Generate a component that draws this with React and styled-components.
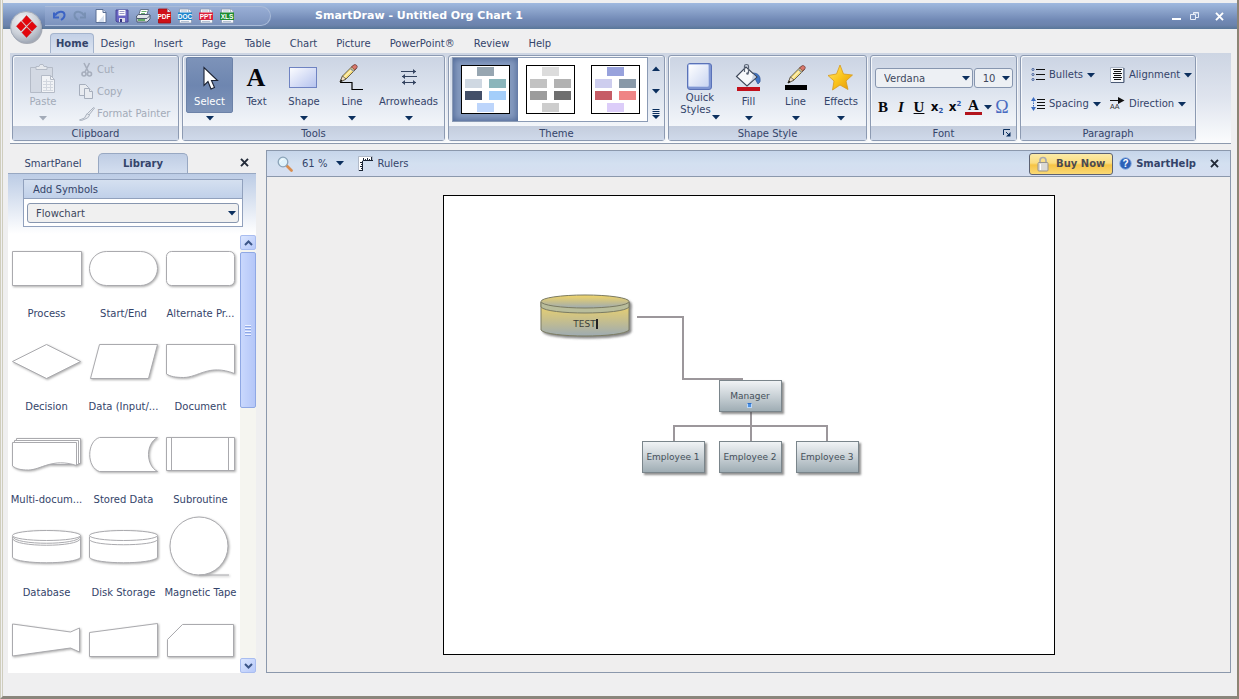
import React from "react";
import styled, { createGlobalStyle, css } from "styled-components";

const ink = "#34446a";
const navy = "#0b2f5e";
const sans = '"DejaVu Sans", Verdana, sans-serif';

const GlobalStyle = createGlobalStyle`
  *, *::before, *::after { box-sizing: border-box; }
  html, body, #root { height: 100%; }
  body {
    margin: 0;
    background: #efefef;
    color: ${ink};
    font-family: ${sans};
    font-size: 10px;
    line-height: 12px;
  }
  button, select, input {
    font: inherit;
    color: inherit;
    margin: 0;
    padding: 0;
    border: 0;
    background: none;
  }
  svg { display: block; flex: none; overflow: visible; }
  ul { list-style: none; margin: 0; padding: 0; }
`;

/* ---------- window frame ---------- */

const Shell = styled.div`
  height: 100%;
  display: flex;
  flex-direction: column;
  padding-top: 3px;
  border-left: 3px double #cfcdbd;
  border-right: 2px solid #8c8474;
  border-bottom: 3px solid #8a867c;
  background: #efeff0;
`;

const TitleBar = styled.header`
  flex: none;
  height: 26px;
  display: flex;
  align-items: center;
  padding: 0 10px 0 6px;
  background: linear-gradient(#9fb9df 0, #8ba3cb 30%, #7189b5 65%, #6c83ac 85%, #597799 100%);
`;

const Orb = styled.button`
  position: relative;
  z-index: 1;
  flex: none;
  width: 36px;
  height: 36px;
  margin-top: 22px;
`;

const QuickBar = styled.div`
  flex: none;
  width: 226px;
  height: 20px;
  display: flex;
  align-items: center;
  gap: 5px;
  padding-left: 6px;
  border: 1px solid #a9bbd8;
  border-left: 0;
  border-radius: 0 10px 10px 0;
  background: linear-gradient(#98aed5, #7c93bd);
`;

const IconButton = styled.button`
  flex: none;
  display: flex;
  align-items: center;
  justify-content: center;
  width: 16px;
  height: 16px;
  opacity: ${(p) => (p.disabled ? 0.5 : 1)};
`;

const WindowTitle = styled.h1`
  flex: 1;
  margin: 0 0 0 44px;
  color: #fff;
  font-size: 11px;
  font-weight: bold;
`;

const WindowButtons = styled.div`
  display: flex;
  align-items: center;
  gap: 2px;
  & > :last-child { margin-left: 7px; }
`;

/* ---------- tabs ---------- */

const TabBar = styled.nav`
  flex: none;
  height: 24px;
  display: flex;
  align-items: flex-end;
  padding-left: 47px;
`;

const MenuTab = styled.button`
  height: 20px;
  padding: 1px 9px 0;
  margin-right: 1px;
  color: ${ink};
  ${(p) =>
    p.$active &&
    css`
      padding: 1px 5px 0;
      margin-right: -3px;
      font-weight: bold;
      border: 1px solid #a4b4cd;
      border-bottom: 0;
      border-radius: 4px 4px 0 0;
      background: linear-gradient(#c3d0e6, #dde5f1);
    `}
`;

/* ---------- ribbon ---------- */

const Ribbon = styled.section`
  flex: none;
  height: 91px;
  display: flex;
  gap: 3px;
  margin: 0 6px 0 7px;
  padding: 2px;
  border-bottom: 1px solid #8d9aae;
  background: linear-gradient(#cdd5e3, #dfe4ee 50%, #fbfcfd);
`;

const Group = styled.section`
  flex: none;
  width: ${(p) => p.$width}px;
  display: flex;
  flex-direction: column;
  border: 1px solid #8c9ab2;
  border-radius: 3px;
  box-shadow: inset 1px 1px 0 #f6f8fb, 1px 1px 0 #f3f5f8;
  background: linear-gradient(#cbd4e3, #dce3ee 40%, #f2f5f9 82%, #fff);
`;

const GroupBody = styled.div`
  flex: 1;
  min-height: 0;
  display: flex;
  padding: ${(p) => p.$pad || "1px 3px 0"};
`;

const GroupTitle = styled.h2`
  position: relative;
  margin: 0;
  height: 14px;
  font-size: 10px;
  font-weight: normal;
  line-height: 15px;
  text-align: center;
  background: linear-gradient(#c4cddd, #cfd9ea);
`;

const Launcher = styled.button`
  position: absolute;
  right: 4px;
  top: 2px;
  width: 10px;
  height: 10px;
`;

const BigButton = styled.button`
  flex: none;
  width: ${(p) => p.$width}px;
  display: flex;
  flex-direction: column;
  align-items: center;
  color: ${(p) => (p.disabled ? "#a3abb8" : ink)};
  & > svg { margin-top: 3px; }
`;

const Face = styled.span`
  align-self: stretch;
  height: 56px;
  display: flex;
  flex-direction: column;
  align-items: center;
  padding-top: 4px;
  border: 1px solid transparent;
  border-radius: 2px;
  ${(p) =>
    p.$on &&
    css`
      color: #fff;
      border-color: #6c82a8;
      background: linear-gradient(#7d93b9, #6e86b0 50%, #7d93b8);
    `}
`;

const IconSlot = styled.span`
  height: 34px;
  display: flex;
  align-items: center;
`;

const Label = styled.span`
  white-space: nowrap;
`;

const SecondLine = styled.span`
  display: flex;
  align-items: flex-end;
  gap: 1px;
  & > svg { margin-bottom: -4px; }
`;

const SmallList = styled.div`
  display: flex;
  flex-direction: column;
  gap: 6px;
  padding: 5px 0 0 9px;
`;

const SmallButton = styled.button`
  height: 16px;
  display: flex;
  align-items: center;
  gap: ${(p) => (p.$tight ? 2 : 4)}px;
  white-space: nowrap;
  color: ${(p) => (p.disabled ? "#a3abb8" : ink)};
`;

const ThemeFrame = styled.div`
  flex: none;
  width: 196px;
  height: 65px;
  display: flex;
  border: 1px solid #8b9bb5;
  background: #fff;
`;

const ThemeTile = styled.button`
  flex: none;
  width: 65px;
  height: 63px;
  display: flex;
  align-items: center;
  justify-content: center;
  ${(p) =>
    p.$on &&
    css`
      background: #8499be;
      box-shadow: inset 0 0 6px 1px #4f6896;
    `}
`;

const ThemeScroll = styled.div`
  flex: 1;
  display: flex;
  flex-direction: column;
  justify-content: space-between;
  align-items: center;
  padding: 3px 0 4px;
`;

const FontPanel = styled.div`
  flex: 1;
  display: flex;
  flex-direction: column;
  gap: 10px;
`;

const Row = styled.div`
  display: flex;
  align-items: center;
  gap: ${(p) => p.$gap || 0}px;
`;

const SelectBox = styled.span`
  position: relative;
  flex: ${(p) => p.$flex || "none"};
  display: flex;
  & > svg {
    position: absolute;
    right: 3px;
    top: 8px;
    pointer-events: none;
  }
`;

const Select = styled.select`
  appearance: none;
  width: 100%;
  height: 20px;
  padding: 1px 0 0 8px;
  border: 1px solid #8796af;
  border-radius: 3px;
  background: ${(p) => p.$bg || "#edf0f4"};
  color: #3d475c;
`;

const FormatButton = styled.button`
  height: 18px;
  min-width: 16px;
  display: flex;
  align-items: center;
  justify-content: center;
  gap: 2px;
  font-family: "Liberation Serif", serif;
  font-size: ${(p) => p.$size || 15}px;
  line-height: 18px;
  font-weight: ${(p) => (p.$size ? "normal" : "bold")};
  color: ${(p) => p.$color || "#05070c"};
  font-style: ${(p) => (p.$italic ? "italic" : "normal")};
  text-decoration: ${(p) => (p.$underline ? "underline" : "none")};
`;

const Script = styled(FormatButton)`
  font-family: ${sans};
  font-size: 12px;
  gap: 0;
  & > small {
    align-self: ${(p) => (p.$up ? "flex-start" : "flex-end")};
    font-size: 7px;
    line-height: ${(p) => (p.$up ? 12 : 9)}px;
    color: #2c55a8;
  }
`;

const FontColor = styled.span`
  line-height: 13px;
  border-bottom: 3px solid #b3141c;
  padding: 0 3px;
`;

const ParagraphGrid = styled.div`
  flex: 1;
  display: grid;
  grid-template-columns: 79px auto;
  grid-auto-rows: 16px;
  row-gap: 13px;
`;

/* ---------- work area ---------- */

const Work = styled.main`
  flex: 1;
  min-height: 0;
  display: flex;
  gap: 10px;
  padding: 6px 6px 23px 5px;
`;

const SidePanel = styled.aside`
  flex: none;
  width: 248px;
  display: flex;
  flex-direction: column;
`;

const PanelTabs = styled.div`
  flex: none;
  height: 24px;
  display: flex;
  align-items: flex-end;
  border-bottom: 1px solid #98a8c2;
`;

const PanelTab = styled.button`
  height: 20px;
  width: 90px;
  padding-top: 1px;
  ${(p) =>
    p.$active &&
    css`
      padding-top: 0;
      font-weight: bold;
      border: 1px solid #98a8c2;
      border-bottom: 0;
      border-radius: 5px 5px 0 0;
      background: linear-gradient(#bfcde4, #d3deef);
    `}
`;

const CloseButton = styled.button`
  margin-left: auto;
  width: 24px;
  height: 22px;
  display: flex;
  align-items: center;
  justify-content: center;
`;

const LibraryBody = styled.div`
  flex: 1;
  min-height: 0;
  display: flex;
  flex-direction: column;
  background: linear-gradient(#bccce5 0, #fff 60px);
`;

const AddBox = styled.section`
  flex: none;
  margin: 5px 13px 0 15px;
  border: 1px solid #91a1bd;
  background: #fff;
`;

const AddTitle = styled.h2`
  margin: 0;
  padding-left: 9px;
  height: 19px;
  font-size: 10px;
  font-weight: normal;
  line-height: 20px;
  border-bottom: 1px solid #91a1bd;
  background: linear-gradient(#d5e0f0, #c0d0e9);
`;

const AddField = styled.div`
  padding: 4px 3px 3px;
`;

const ListArea = styled.div`
  flex: 1;
  min-height: 0;
  display: flex;
  padding-top: 8px;
`;

const ShapeList = styled.ul`
  flex: 1;
  min-height: 0;
  overflow: hidden;
  display: grid;
  grid-template-columns: repeat(3, 77px);
  grid-auto-rows: 84px;
  row-gap: 9px;
  padding-top: 2px;
`;

const ShapeItem = styled.li`
  display: flex;
  flex-direction: column;
  gap: 4px;
  text-align: center;
  line-height: 14px;
  & > svg {
    fill: #fff;
    stroke: #aaaaae;
    filter: drop-shadow(1px 1px 1px rgba(90, 90, 90, 0.5));
  }
  & > span {
    white-space: nowrap;
    margin: 0 -4px;
  }
`;

const ScrollTrack = styled.div`
  flex: none;
  width: 16px;
  display: flex;
  flex-direction: column;
  gap: 2px;
  background: #f5f5f0;
`;

const ScrollButton = styled.button`
  flex: none;
  height: 15px;
  display: flex;
  align-items: center;
  justify-content: center;
  border: 1px solid #a9bdf0;
  border-radius: 2px;
  background: linear-gradient(135deg, #dbe6fe, #b7c9fa);
`;

const ScrollThumb = styled.div`
  flex: 157;
  display: flex;
  flex-direction: column;
  align-items: center;
  justify-content: center;
  gap: 1px;
  border: 1px solid #8fa8e4;
  border-radius: 2px;
  background: linear-gradient(90deg, #c9d8fd, #b4c6f8);
  & > i {
    width: 6px;
    height: 1px;
    background: #eef3ff;
    box-shadow: 0 1px 0 #8da7e6;
    margin-bottom: 1px;
  }
`;

const ScrollRest = styled.div`
  flex: 250;
`;

const DocPanel = styled.section`
  flex: 1;
  min-width: 0;
  display: flex;
  flex-direction: column;
  border: 1px solid #8b98ac;
`;

const DocBar = styled.div`
  flex: none;
  height: 26px;
  display: flex;
  align-items: center;
  padding: 0 8px 0 10px;
  border-bottom: 1px solid #8b98ac;
  background: linear-gradient(#c6d5ea, #d3e0f0 50%, #d6def0);
`;

const BarButton = styled.button`
  display: flex;
  align-items: center;
  gap: ${(p) => p.$gap || 4}px;
  margin-right: 14px;
`;

const BuyButton = styled.button`
  margin-left: auto;
  width: 84px;
  height: 22px;
  display: flex;
  align-items: center;
  justify-content: center;
  gap: 7px;
  font-weight: bold;
  color: #4b4a50;
  border: 1px solid #5c6273;
  border-radius: 3px;
  background: linear-gradient(#fbeaa8, #fadd80 45%, #f6c445 55%, #fad976);
`;

const HelpButton = styled.button`
  display: flex;
  align-items: center;
  gap: 4px;
  margin: 0 10px 0 6px;
  font-weight: bold;
`;

const Canvas = styled.div`
  flex: 1;
  min-height: 0;
  display: flex;
  align-items: center;
  justify-content: center;
  background: #efeeee;
`;

const Paper = styled.div`
  position: relative;
  width: 612px;
  height: 460px;
  border: 1px solid #000;
  background: #fff;
  & > svg {
    position: absolute;
    left: 0;
    top: 0;
  }
`;

const Node = styled.div`
  position: absolute;
  left: ${(p) => p.$x}px;
  top: ${(p) => p.$y}px;
  width: 63px;
  height: 32px;
  border: 1px solid #7a858b;
  box-shadow: 2px 2px 2px rgba(70, 70, 70, 0.6);
  background: linear-gradient(#f0f3f5, #c9d1d6 50%, #9fadb4);
  color: #45505a;
  font-size: 9px;
  line-height: 30px;
  text-align: center;
  white-space: nowrap;
`;

const Collapse = styled.button`
  position: absolute;
  left: 27px;
  bottom: 3px;
  width: 5px;
  height: 5px;
  background: #4d8fe0;
  border: 1px solid #b9d8fa;
  border-top-color: #2c6cc4;
`;

const Typed = styled.div`
  position: absolute;
  left: 97px;
  top: 122px;
  width: 90px;
  text-align: center;
  font-size: 9px;
  line-height: 12px;
  color: #3b3f3a;
  & > span { border-right: 2px solid #222; }
`;

/* ---------- icons ---------- */

const Caret = ({ color = navy }) => (
  <svg width="8" height="5" viewBox="0 0 8 5"><path d="M0 0h8L4 4.600z" fill={color} /></svg>
);
const CaretUp = () => (
  <svg width="8" height="5" viewBox="0 0 8 5"><path d="M0 5h8L4 .4z" fill={navy} /></svg>
);
const Cross = ({ color = "#222a38" }) => (
  <svg width="9" height="9" viewBox="0 0 9 9">
    <path d="M1 .8l7 7.400M8 .8L1 8.200" stroke={color} strokeWidth="1.900" />
  </svg>
);

const OrbIcon = () => (
  <svg width="36" height="36" viewBox="0 0 36 36">
    <defs>
      <radialGradient id="orb" cx=".4" cy=".3" r=".75">
        <stop offset="0" stopColor="#f4f5f7" />
        <stop offset=".6" stopColor="#ccd1d9" />
        <stop offset="1" stopColor="#9da5b2" />
      </radialGradient>
    </defs>
    <circle cx="18" cy="19.500" r="15.500" fill="#4b5568" opacity=".45" />
    <circle cx="17" cy="18" r="15.500" fill="url(#orb)" stroke="#a3abb9" />
    <g fill="#e3050c" stroke="#b80a10" strokeWidth=".4">
      <path d="M17.500 6.500l5 5.200-5 4.800-4.500-4.800z" />
      <path d="M12 12.300l4.600 5-4.600 4.700-4.600-4.700z" />
      <path d="M23 12.500l4.800 5-4.800 4.700-4.800-4.700z" />
      <path d="M17.700 18.400l4.800 4.800-5 5.300-4.600-5z" />
    </g>
  </svg>
);

const UndoIcon = ({ flip, color }) => (
  <svg width="16" height="16" viewBox="0 0 16 16">
    <g transform={flip ? "translate(16 0) scale(-1 1)" : undefined} fill="none" stroke={color}>
      <path d="M4 7.500C6.500 3 13 2.500 13.500 6.500c.2 2-1 4-3.500 5.500" strokeWidth="2" />
      <path d="M3 4.500V9.500h5" strokeWidth="2" />
    </g>
  </svg>
);
const PageIcon = () => (
  <svg width="16" height="16" viewBox="0 0 16 16">
    <path d="M3 1.500h7l3 3v10H3z" fill="#fff" stroke="#5a6f94" />
    <path d="M10 1.500v3h3" fill="#d5dfef" stroke="#5a6f94" />
    <path d="M11 7v7H5z" fill="#d8e2f0" />
  </svg>
);
const SaveIcon = () => (
  <svg width="16" height="16" viewBox="0 0 16 16">
    <path d="M2 2h12v12H3l-1-1z" fill="#6a66c4" stroke="#4a4896" />
    <path d="M4.500 2h7v5.500h-7z" fill="#fff" />
    <path d="M5.500 3.500h5M5.500 5.500h5" stroke="#9c9cc8" />
    <path d="M5 10h6v4H5z" fill="#dcdce8" />
    <path d="M6 11h2v3H6z" fill="#35337f" />
  </svg>
);
const PrintIcon = () => (
  <svg width="16" height="16" viewBox="0 0 16 16">
    <path d="M5.500 1.500h8l-2 6h-8z" fill="#fff" stroke="#66758c" />
    <path d="M6.500 3.500h5M6 5.500h4" stroke="#6bb06b" />
    <path d="M1.500 8l2-1.500h10L15 7v4l-3 3H2z" fill="#e2e5ea" stroke="#4e5a6e" />
    <path d="M2 10.500h10l3-3" stroke="#4e5a6e" fill="none" />
    <path d="M3 12h7" stroke="#3c9a3c" strokeWidth="1.500" />
  </svg>
);
const FileIcon = ({ name, color, solid }) => (
  <svg width="16" height="16" viewBox="0 0 16 16">
    <path d="M2.500 1h9l3 3v11h-12z" fill={solid ? color : "#f4f6fa"} stroke={solid ? "#a00c10" : "#8a99b0"} strokeWidth=".8" />
    <path d="M11.500 1v3h3" fill="#fff" stroke="#8a99b0" strokeWidth=".6" />
    <path d="M4 3h6M4 13.500h8" stroke={solid ? color : "#b4c0d2"} />
    <rect x={solid ? 2 : 1} y="4.500" width={solid ? 13 : 14} height="7.500" fill={color} />
    <text x="8" y="10.800" textAnchor="middle" fontFamily="Liberation Sans, sans-serif" fontWeight="bold" fontSize="6.500" fill="#fff">{name}</text>
  </svg>
);

const MinIcon = () => (
  <svg width="12" height="10" viewBox="0 0 12 10"><path d="M2 8h9" stroke="#fff" strokeWidth="2" /></svg>
);
const RestoreIcon = () => (
  <svg width="12" height="10" viewBox="0 0 12 10" fill="none" stroke="#e8eef8">
    <path d="M5.500 3V1.500h5v5H8" /><path d="M2.500 3.500h5v5h-5z" /><path d="M5.500 2h5" />
  </svg>
);

const PasteIcon = () => (
  <svg width="30" height="30" viewBox="0 0 30 30" stroke="#b4bbc7">
    <path d="M2.500 3.500h22v25h-22z" fill="#d3d9e3" />
    <path d="M8 2.500h3l1-2h3l1 2h3v3H8z" fill="#e6e9ee" />
    <path d="M13.500 11.500h9l4 4v13h-13z" fill="#f1f3f6" />
    <path d="M22.500 11.500v4h4" fill="none" />
    <path d="M15 17.500h10M15 20.500h10M15 23.500h10M15 26.500h10M18.500 15v12M22.500 17v10" stroke="#d2d7df" />
  </svg>
);
const CutIcon = () => (
  <svg width="16" height="16" viewBox="0 0 16 16" fill="none" stroke="#a6aebc" strokeWidth="1.600">
    <path d="M5 1l4.500 9M10.500 1L6 10" />
    <circle cx="5" cy="12" r="2" /><circle cx="10.500" cy="12" r="2" />
  </svg>
);
const CopyIcon = () => (
  <svg width="16" height="16" viewBox="0 0 16 16" fill="#e8ebf0" stroke="#a6aebc">
    <path d="M.5.500h6l3 3v8h-9z" /><path d="M5.500 4.500h5l3 3v7h-8z" /><path d="M10.500 4.500v3h3" />
  </svg>
);
const BrushIcon = () => (
  <svg width="16" height="16" viewBox="0 0 16 16" stroke="#aab2bf" fill="#e6e9ee">
    <path d="M14.500 1.500l-6 6 1.500 1.500 5.500-7z" />
    <path d="M8 7.500l2.500 2-2 2.500-6 2.500-2-.5 5-2z" />
  </svg>
);

const CursorIcon = () => (
  <svg width="16" height="26" viewBox="0 0 16 26">
    <path d="M2 1.500v18l4-4 3 7.500 3.500-1.500-3-7h6z" fill="#fff" stroke="#1b2233" strokeWidth="1.100" />
  </svg>
);
const TextIcon = () => (
  <svg width="28" height="34" viewBox="0 0 28 34">
    <text x="13" y="24" textAnchor="middle" fontFamily="Liberation Serif, serif" fontWeight="bold" fontSize="26" fill="#05070c">A</text>
  </svg>
);
const ShapeIcon = () => (
  <svg width="30" height="24" viewBox="0 0 30 24">
    <defs><linearGradient id="shp" x1="0" y1="0" x2="1" y2="1"><stop stopColor="#fdfdff" /><stop offset="1" stopColor="#b4c2ee" /></linearGradient></defs>
    <rect x=".5" y=".5" width="27" height="20" fill="url(#shp)" stroke="#6f83c2" />
  </svg>
);
const Pencil = () => (
  <g>
    <path d="M1 18l2.500-6L14 1.500l3.500 3L7 15z" fill="#f5dc7a" stroke="#4a4334" strokeWidth=".8" />
    <path d="M4.800 13.600L15.500 3" stroke="#fdf3bf" strokeWidth="1.200" />
    <path d="M12.500 3L15 .8c1.500-.8 4 1 3 2.700l-2.200 2.500z" fill="#d9776c" stroke="#6b3a36" strokeWidth=".8" />
    <path d="M11.500 4.500l3.500 3" stroke="#888f98" strokeWidth="1.400" />
    <path d="M1 18l2.500-6 3.500 3z" fill="#f3e2c8" stroke="#4a4334" strokeWidth=".7" />
    <path d="M1 18l1-2.600 1.500 1.500z" fill="#000" />
  </g>
);
const LineIcon = () => (
  <svg width="26" height="30" viewBox="0 0 26 30">
    <path d="M1 18.500h12v7h11" fill="none" stroke="#000" strokeWidth="1.200" /><Pencil />
  </svg>
);
const ArrowsIcon = () => (
  <svg width="18" height="22" viewBox="0 0 18 22" stroke="#33435f" fill="none">
    <path d="M1 3.500h15M2 8.500h15M2 14.500h14" />
    <path d="M13 1l3 2.500L13 6zM5 6L2 8.500 5 11zM5 12l-3 2.500L5 17zM13 12l3 2.500-3 2.500z" fill="#33435f" stroke="none" />
  </svg>
);
const QuickIcon = () => (
  <svg width="26" height="30" viewBox="0 0 26 30">
    <defs><linearGradient id="qk" x1="0" y1="0" x2="1" y2="1"><stop stopColor="#fff" /><stop offset="1" stopColor="#c9d5f1" /></linearGradient></defs>
    <rect x=".5" y="1.500" width="24" height="26" rx="2.500" fill="#7f96d2" stroke="#5a72b8" />
    <rect x="1.500" y="2.500" width="20" height="22" rx="1" fill="url(#qk)" stroke="#b9c8ec" />
  </svg>
);
const FillIcon = () => (
  <svg width="28" height="30" viewBox="0 0 28 30">
    <rect x="2" y="23" width="23" height="4" fill="#c2101c" />
    <path d="M18 9c5 0 8 3 7 9l-2 2c-1-1-2-5-5-7z" fill="#3f74c4" stroke="#234a8c" strokeWidth=".6" />
    <path d="M1.500 12.500L11 3l11 10-10 9z" fill="#f7f9fc" stroke="#3c4658" strokeWidth="1.100" />
    <path d="M12 21l9-8-3-3-1 5z" fill="#c9d3e3" />
    <path d="M9.500 8V2c0-2 4-2 4 0v7" fill="none" stroke="#5a6475" strokeWidth="1.200" />
    <circle cx="12.500" cy="9.500" r="1.300" fill="#5a6475" />
  </svg>
);
const StrokeIcon = () => (
  <svg width="24" height="29" viewBox="0 0 24 29">
    <rect x="1" y="20" width="22" height="5" fill="#000" />
    <g transform="translate(3 0)"><Pencil /></g>
  </svg>
);
const StarIcon = () => (
  <svg width="28" height="30" viewBox="0 0 28 30">
    <defs><linearGradient id="star" x1="0" y1="0" x2="1" y2="1"><stop stopColor="#ffe873" /><stop offset=".5" stopColor="#fbc51d" /><stop offset="1" stopColor="#e29608" /></linearGradient></defs>
    <path d="M13 1l3.500 9 9 1-6.500 6 2 8.500-8-4.500-7.500 5L7 17 1 11.500l8.500-1.500z" fill="url(#star)" stroke="#d89a1c" strokeWidth=".8" />
  </svg>
);

const MoreIcon = () => (
  <svg width="8" height="10" viewBox="0 0 8 10"><path d="M.5.500h7M.5 2.500h7M.5 4.500h7" stroke={navy} /><path d="M0 6h8L4 10z" fill={navy} /></svg>
);
const LaunchIcon = () => (
  <svg width="10" height="10" viewBox="0 0 10 10" stroke={navy} fill="none"><path d="M1.500 7V1.500H8M4 4l3 3" /><path d="M8.500 4v4.500H4z" fill={navy} stroke="none" /></svg>
);
const BulletsIcon = () => (
  <svg width="14" height="14" viewBox="0 0 14 14">
    <path d="M5 1.500h9M5 6.500h9M5 11.500h9" stroke="#111" />
    <g fill="#c2d0ea" stroke="#33508c" strokeWidth=".8"><circle cx="2" cy="1.500" r="1.100" /><circle cx="2" cy="6.500" r="1.100" /><circle cx="2" cy="11.500" r="1.100" /></g>
  </svg>
);
const SpacingIcon = () => (
  <svg width="14" height="16" viewBox="0 0 14 16">
    <path d="M6 3.500h8M6 6.500h8M6 9.500h8M6 12.500h8" stroke="#111" />
    <path d="M0 5l2.500-4L5 5zM0 11l2.500 4L5 11z" fill="#3a6cc0" /><path d="M2.500 4v8" stroke="#3a6cc0" strokeDasharray="1.500 1" />
  </svg>
);
const AlignIcon = () => (
  <svg width="15" height="16" viewBox="0 0 15 16">
    <path d="M.5.500h13v15H.5z" fill="#f6f8fb" stroke="#a9b4c6" />
    <path d="M14 1v14.500H1" fill="none" stroke="#4b5a75" />
    <path d="M3 2.500h9M4 4.500h7M3 6.500h9M4 8.500h7M3 10.500h9M4 12.500h7" stroke="#111" />
  </svg>
);
const DirectionIcon = () => (
  <svg width="15" height="14" viewBox="0 0 15 14">
    <path d="M0 3.500h9" stroke="#111" /><path d="M8 0l6.500 3.500L8 7z" fill="#111" />
    <text x="0" y="12" fontFamily="Liberation Sans, sans-serif" fontSize="7" fill="#333">AA</text>
  </svg>
);
const ZoomIcon = () => (
  <svg width="16" height="16" viewBox="0 0 16 16">
    <path d="M9.500 9.500l5 5" stroke="#d98d4e" strokeWidth="2.800" strokeLinecap="round" />
    <circle cx="6" cy="6" r="4.800" fill="#dff2fa" stroke="#8ba3b8" strokeWidth="1.300" />
    <path d="M3.500 5.500c.5-1.500 1.500-2 3-2.200" stroke="#fff" fill="none" />
  </svg>
);
const RulerIcon = () => (
  <svg width="15" height="15" viewBox="0 0 15 15">
    <path d="M.5.500h14v4h-10v10h-4z" fill="#fff" stroke="#9aa4b5" strokeWidth=".7" />
    <path d="M5.500 4.500V2M7.500 4.500v-1.500M9.500 4.500V2M11.500 4.500v-1.500M13.500 4.500V1M5 4.500h10M4.500 5v10M4.500 6.500H2M4.500 8.500H3M4.500 10.500H2M4.500 12.500H3M4.500 14.500H1" stroke="#1b2535" />
  </svg>
);
const LockIcon = () => (
  <svg width="12" height="16" viewBox="0 0 12 16">
    <path d="M3 8V4.500c0-4 6-4 6 0V8" fill="none" stroke="#a9aab0" strokeWidth="1.700" />
    <rect x="1" y="6.500" width="10" height="8.500" rx="1" fill="#dcdad6" stroke="#98948c" />
    <path d="M3.500 8v6" stroke="#fff" />
  </svg>
);
const HelpIcon = () => (
  <svg width="13" height="13" viewBox="0 0 13 13">
    <circle cx="6.500" cy="6.500" r="5.800" fill="#2d62b8" stroke="#8fb0e2" />
    <text x="6.500" y="10" textAnchor="middle" fontFamily="Liberation Sans, sans-serif" fontWeight="bold" fontSize="10" fill="#fff">?</text>
  </svg>
);

const ThemeThumb = ({ c }) => (
  <svg width="49" height="49" viewBox="0 0 49 49">
    <rect x=".5" y=".5" width="48" height="48" fill="#fff" stroke="#000" />
    <rect x="16" y="2" width="17" height="9" fill={c[0]} />
    <rect x="4" y="14" width="17" height="9" fill={c[1]} />
    <rect x="28" y="14" width="17" height="9" fill={c[2]} />
    <rect x="4" y="26" width="17" height="9" fill={c[3]} />
    <rect x="28" y="26" width="17" height="9" fill={c[4]} />
    <rect x="16" y="38" width="17" height="9" fill={c[5]} />
  </svg>
);

/* ---------- data ---------- */

const tabs = ["Design", "Insert", "Page", "Table", "Chart", "Picture", "PowerPoint®", "Review", "Help"];

const themes = [
  ["#97a6b1", "#cfd8e2", "#8ab5bb", "#434f68", "#a4cefa", "#bdd5fb"],
  ["#dcdcdc", "#c2c2c2", "#b2b2b2", "#9c9c9c", "#6f6f6f", "#cdcdcd"],
  ["#98a2dc", "#cdcdee", "#8999a8", "#c65c66", "#ef8485", "#dccdf9"],
];

const shapes = [
  { name: "Process", art: <path d="M4.500 14.500h69v34h-69z" /> },
  { name: "Start/End", art: <rect x="4.500" y="14.500" width="68" height="34" rx="17" /> },
  { name: "Alternate Pr...", art: <rect x="4.500" y="14.500" width="68" height="34" rx="5" /> },
  { name: "Decision", art: <path d="M4.500 31.500l34-17 34 17-34 17z" /> },
  { name: "Data (Input/...", art: <path d="M14.500 14.500h58l-9 34h-58z" /> },
  { name: "Document", art: <path d="M4.500 14.500h68v29c-26-10-36 4-51 4-8 0-13-1-17-3.500z" /> },
  {
    name: "Multi-docum...",
    art: (
      <g>
        <path d="M8.500 15.500h64v25h-64z" />
        <path d="M6.500 17.500h64v24h-64z" />
        <path d="M4.500 19.500h64v23c-24-8-36 4.500-48 4.500-8 0-12-1-16-4z" />
      </g>
    ),
  },
  { name: "Stored Data", art: <path d="M14.500 14.500h58c-12 6-12 28 0 34h-58c-13-4-13-30 0-34z" /> },
  { name: "Subroutine", art: <g><path d="M4.500 14.500h68v33h-68z" /><path d="M9.500 14.500v33M66.500 14.500v33" /></g> },
  {
    name: "Database",
    art: (
      <g>
        <path d="M4.500 20.500v21c6 7 62 7 68 0v-21" />
        <path d="M4.500 20.500c2 9 66 9 68 0M4.500 22.500c2 9 66 9 68 0" />
        <ellipse cx="38.500" cy="19.500" rx="34" ry="5" />
      </g>
    ),
  },
  {
    name: "Disk Storage",
    art: (
      <g>
        <path d="M4.500 20.500v21c6 7 62 7 68 0v-21" />
        <path d="M4.500 23.500c2 7 66 7 68 0" />
        <ellipse cx="38.500" cy="19.500" rx="34" ry="5" />
      </g>
    ),
  },
  { name: "Magnetic Tape", art: <g><circle cx="37" cy="30" r="29" /><path d="M37 59h30" /></g> },
  { art: <path d="M4.500 15l58 8 9-4v24l-9-4-58 8z" /> },
  { art: <path d="M4.500 23.500l68-9v33h-68z" /> },
  { art: <path d="M20.500 15.500h51v32h-66v-17z" /> },
];

function Big({ width, icon, label, on, caret = true, disabled, second }) {
  return (
    <BigButton type="button" $width={width} disabled={disabled} aria-pressed={on}>
      <Face $on={on}>
        <IconSlot>{icon}</IconSlot>
        <Label>{label}</Label>
        {second && <SecondLine>{second}<Caret /></SecondLine>}
      </Face>
      {caret && <Caret color={disabled ? "#a3abb8" : navy} />}
    </BigButton>
  );
}

function Small({ icon, label, caret, disabled }) {
  return (
    <SmallButton type="button" disabled={disabled} $tight={disabled}>
      {icon}<span>{label}</span>{caret && <Caret />}
    </SmallButton>
  );
}

function Chart() {
  return (
    <Paper>
      <svg width="610" height="458" viewBox="0 0 610 458">
        <defs>
          <linearGradient id="cyl" x1="0" y1="0" x2="0" y2="1"><stop stopColor="#f2d569" /><stop offset=".5" stopColor="#c9c08a" /><stop offset="1" stopColor="#9eabb2" /></linearGradient>
          <filter id="soft" x="-10%" y="-10%" width="125%" height="140%"><feDropShadow dx="2" dy="2" stdDeviation="1" floodColor="#555" floodOpacity=".7" /></filter>
        </defs>
        <g stroke="#7b7b62" filter="url(#soft)" fill="url(#cyl)">
          <path d="M97 106v28c6 8 82 8 88 0v-28z" />
          <path d="M97 106v5c6 8 82 8 88 0v-5z" fill="#b9bd9b" />
          <ellipse cx="141" cy="105.500" rx="44" ry="6.500" />
        </g>
        <g fill="none" stroke="#9c979b" strokeWidth="2">
          <path d="M193 121h46v62h60" />
          <path d="M307 216v29M230 245v-15h153v15" />
        </g>
      </svg>
      <Typed><span>TEST</span></Typed>
      <Node $x={275} $y={184}>Manager<Collapse type="button" aria-label="Collapse" /></Node>
      <Node $x={198} $y={245}>Employee 1</Node>
      <Node $x={275} $y={245}>Employee 2</Node>
      <Node $x={352} $y={245}>Employee 3</Node>
    </Paper>
  );
}

export default function App() {
  return (
    <>
      <GlobalStyle />
      <Shell>
        <TitleBar>
          <Orb type="button" aria-label="SmartDraw menu"><OrbIcon /></Orb>
          <QuickBar>
            <IconButton type="button" aria-label="Undo"><UndoIcon color="#3b63c4" /></IconButton>
            <IconButton type="button" aria-label="Redo" disabled><UndoIcon flip color="#66809f" /></IconButton>
            <IconButton type="button" aria-label="New"><PageIcon /></IconButton>
            <IconButton type="button" aria-label="Save"><SaveIcon /></IconButton>
            <IconButton type="button" aria-label="Print"><PrintIcon /></IconButton>
            <IconButton type="button" aria-label="Export PDF"><FileIcon name="PDF" color="#cf1118" solid /></IconButton>
            <IconButton type="button" aria-label="Export Word"><FileIcon name="DOC" color="#1f86cc" /></IconButton>
            <IconButton type="button" aria-label="Export PowerPoint"><FileIcon name="PPT" color="#dc1f3c" /></IconButton>
            <IconButton type="button" aria-label="Export Excel"><FileIcon name="XLS" color="#1d8c32" /></IconButton>
          </QuickBar>
          <WindowTitle>SmartDraw - Untitled Org Chart 1</WindowTitle>
          <WindowButtons>
            <IconButton type="button" aria-label="Minimize"><MinIcon /></IconButton>
            <IconButton type="button" aria-label="Restore"><RestoreIcon /></IconButton>
            <IconButton type="button" aria-label="Close window"><Cross color="#fff" /></IconButton>
          </WindowButtons>
        </TitleBar>

        <TabBar>
          <MenuTab type="button" $active>Home</MenuTab>
          {tabs.map((t) => <MenuTab type="button" key={t}>{t}</MenuTab>)}
        </TabBar>

        <Ribbon>
          <Group $width={167}>
            <GroupBody>
              <Big width={54} icon={<PasteIcon />} label="Paste" disabled />
              <SmallList>
                <Small icon={<CutIcon />} label="Cut" disabled />
                <Small icon={<CopyIcon />} label="Copy" disabled />
                <Small icon={<BrushIcon />} label="Format Painter" disabled />
              </SmallList>
            </GroupBody>
            <GroupTitle>Clipboard</GroupTitle>
          </Group>

          <Group $width={263}>
            <GroupBody>
              <Big width={47} icon={<CursorIcon />} label="Select" on />
              <Big width={47} icon={<TextIcon />} label="Text" caret={false} />
              <Big width={48} icon={<ShapeIcon />} label="Shape" />
              <Big width={48} icon={<LineIcon />} label="Line" />
              <Big width={65} icon={<ArrowsIcon />} label="Arrowheads" />
            </GroupBody>
            <GroupTitle>Tools</GroupTitle>
          </Group>

          <Group $width={217}>
            <GroupBody $pad="1px 0 0 3px">
              <ThemeFrame>
                {themes.map((c, i) => (
                  <ThemeTile type="button" key={i} $on={i === 0} aria-label={`Theme ${i + 1}`}><ThemeThumb c={c} /></ThemeTile>
                ))}
              </ThemeFrame>
              <ThemeScroll>
                <IconButton type="button" aria-label="Previous themes"><CaretUp /></IconButton>
                <IconButton type="button" aria-label="Next themes"><Caret /></IconButton>
                <IconButton type="button" aria-label="More themes"><MoreIcon /></IconButton>
              </ThemeScroll>
            </GroupBody>
            <GroupTitle>Theme</GroupTitle>
          </Group>

          <Group $width={199}>
            <GroupBody $pad="1px 2px 0 7px">
              <Big width={48} icon={<QuickIcon />} label="Quick" second="Styles" caret={false} />
              <Big width={49} icon={<FillIcon />} label="Fill" />
              <Big width={45} icon={<StrokeIcon />} label="Line" />
              <Big width={46} icon={<StarIcon />} label="Effects" />
            </GroupBody>
            <GroupTitle>Shape Style</GroupTitle>
          </Group>

          <Group $width={147}>
            <GroupBody $pad="12px 3px 0 4px">
              <FontPanel>
                <Row $gap={1}>
                  <SelectBox $flex="97"><Select aria-label="Font" defaultValue="Verdana"><option>Verdana</option></Select><Caret /></SelectBox>
                  <SelectBox $flex="39"><Select aria-label="Font size" defaultValue="10"><option>10</option></Select><Caret /></SelectBox>
                </Row>
                <Row $gap={2}>
                  <FormatButton type="button">B</FormatButton>
                  <FormatButton type="button" $italic>I</FormatButton>
                  <FormatButton type="button" $underline>U</FormatButton>
                  <Script type="button" aria-label="Subscript">x<small>2</small></Script>
                  <Script type="button" aria-label="Superscript" $up>x<small>2</small></Script>
                  <FormatButton type="button"><FontColor>A</FontColor><Caret /></FormatButton>
                  <FormatButton type="button" $color="#4a6bc0" $size={18}>Ω</FormatButton>
                </Row>
              </FontPanel>
            </GroupBody>
            <GroupTitle>Font<Launcher type="button" aria-label="Font options"><LaunchIcon /></Launcher></GroupTitle>
          </Group>

          <Group $width={176}>
            <GroupBody $pad="11px 3px 0 10px">
              <ParagraphGrid>
                <Small icon={<BulletsIcon />} label="Bullets" caret />
                <Small icon={<AlignIcon />} label="Alignment" caret />
                <Small icon={<SpacingIcon />} label="Spacing" caret />
                <Small icon={<DirectionIcon />} label="Direction" caret />
              </ParagraphGrid>
            </GroupBody>
            <GroupTitle>Paragraph</GroupTitle>
          </Group>
        </Ribbon>

        <Work>
          <SidePanel>
            <PanelTabs>
              <PanelTab type="button">SmartPanel</PanelTab>
              <PanelTab type="button" $active>Library</PanelTab>
              <CloseButton type="button" aria-label="Close panel"><Cross /></CloseButton>
            </PanelTabs>
            <LibraryBody>
              <AddBox>
                <AddTitle>Add Symbols</AddTitle>
                <AddField>
                  <SelectBox><Select aria-label="Symbol library" $bg="#f0f0f0" defaultValue="Flowchart"><option>Flowchart</option></Select><Caret /></SelectBox>
                </AddField>
              </AddBox>
              <ListArea>
                <ShapeList>
                  {shapes.map(({ name, art }, i) => (
                    <ShapeItem key={i}>
                      <svg width="77" height="66" viewBox="0 0 77 66">{art}</svg>
                      {name && <span>{name}</span>}
                    </ShapeItem>
                  ))}
                </ShapeList>
                <ScrollTrack>
                  <ScrollButton type="button" aria-label="Scroll up">
                    <svg width="9" height="6" viewBox="0 0 9 6"><path d="M1 5l3.500-3.500L8 5" fill="none" stroke="#3c5688" strokeWidth="2" /></svg>
                  </ScrollButton>
                  <ScrollThumb><i /><i /><i /><i /></ScrollThumb>
                  <ScrollRest />
                  <ScrollButton type="button" aria-label="Scroll down">
                    <svg width="9" height="6" viewBox="0 0 9 6"><path d="M1 1l3.500 3.500L8 1" fill="none" stroke="#3c5688" strokeWidth="2" /></svg>
                  </ScrollButton>
                </ScrollTrack>
              </ListArea>
            </LibraryBody>
          </SidePanel>

          <DocPanel>
            <DocBar>
              <BarButton type="button" $gap={9}><ZoomIcon /><span>61 %</span><Caret /></BarButton>
              <BarButton type="button"><RulerIcon /><span>Rulers</span></BarButton>
              <BuyButton type="button"><LockIcon />Buy Now</BuyButton>
              <HelpButton type="button"><HelpIcon />SmartHelp</HelpButton>
              <IconButton type="button" aria-label="Close document"><Cross /></IconButton>
            </DocBar>
            <Canvas><Chart /></Canvas>
          </DocPanel>
        </Work>
      </Shell>
    </>
  );
}
